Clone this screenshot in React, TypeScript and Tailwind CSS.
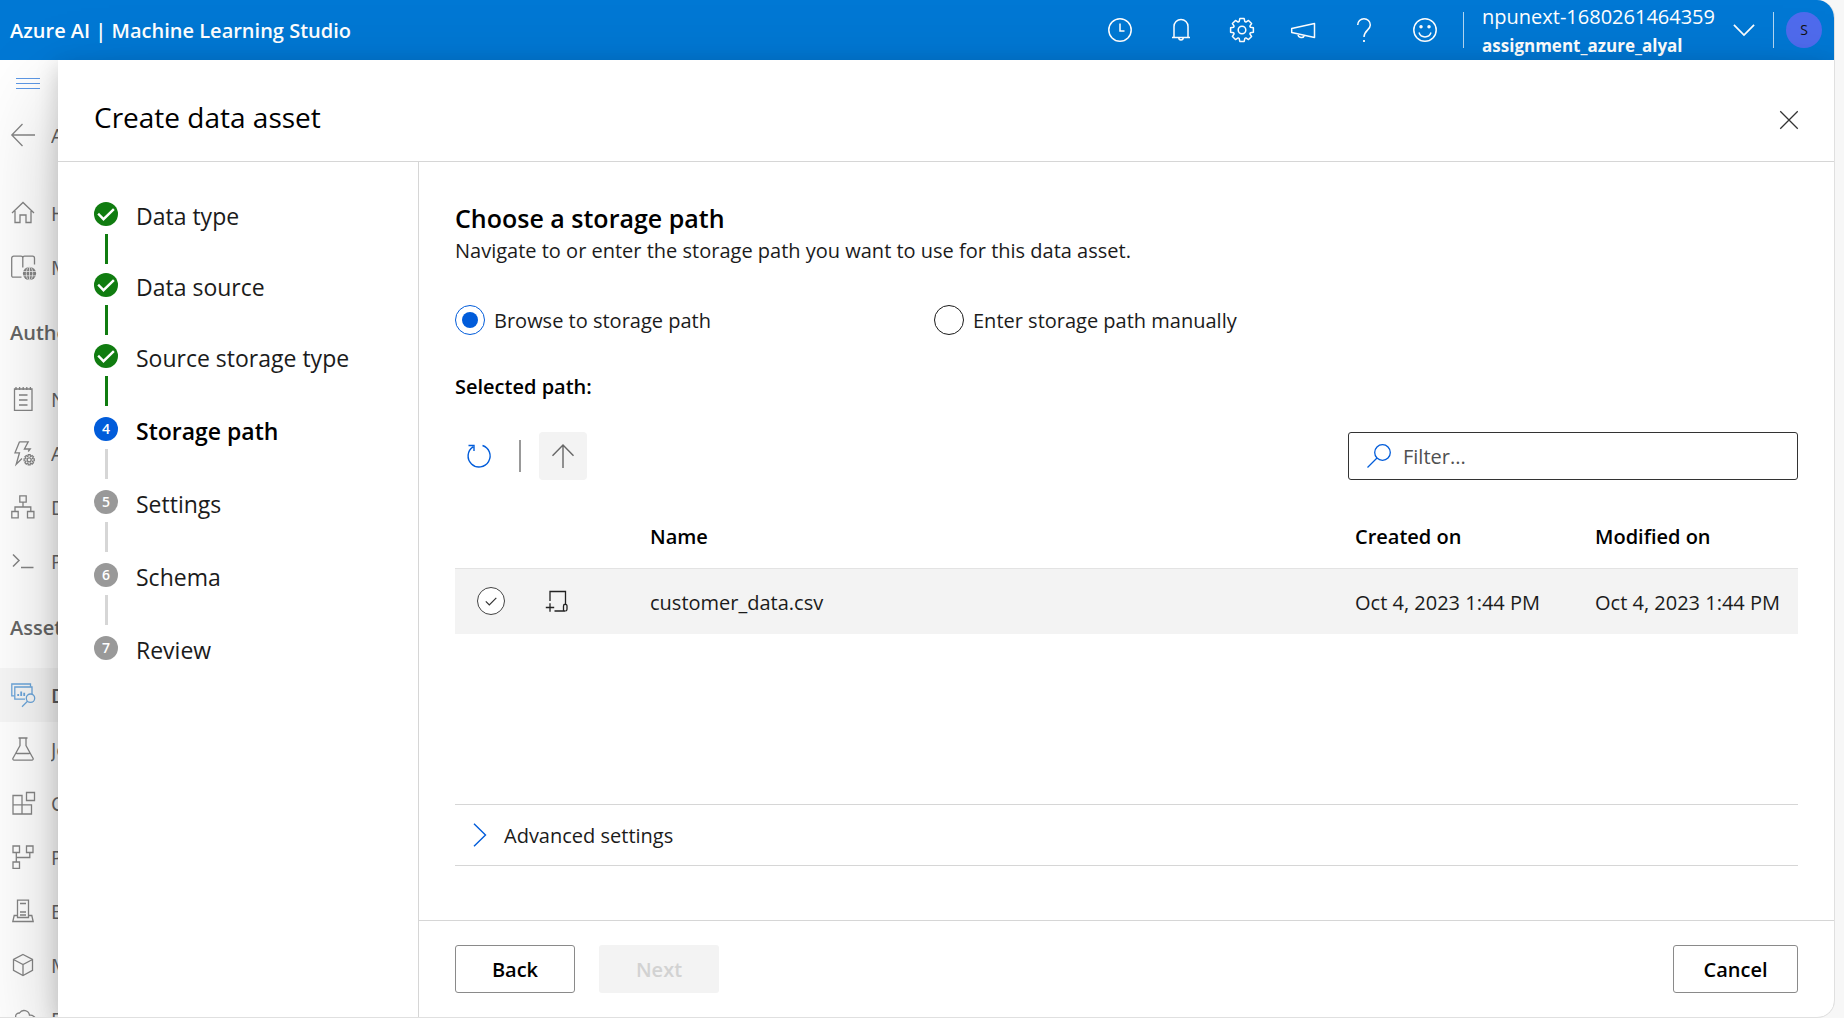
import type { ReactNode } from "react";

function Icon({ children, className = "size-6", stroke = "1.3" }: { children: ReactNode; className?: string; stroke?: string }) {
  return (
    <svg viewBox="0 0 24 24" className={`${className} shrink-0 overflow-visible`} fill="none" stroke="currentColor" strokeWidth={stroke} aria-hidden="true">
      {children}
    </svg>
  );
}

function gearPath(cx: number, cy: number, outer: number, inner: number, teeth: number) {
  const pts: string[] = [];
  for (let i = 0; i < teeth; i++) {
    const a = ((i - 0.5) / teeth) * Math.PI * 2;
    const s = (Math.PI * 2) / teeth;
    const corners: [number, number][] = [
      [0.08, inner],
      [0.26, outer],
      [0.74, outer],
      [0.92, inner],
    ];
    for (const [f, r] of corners) {
      pts.push(`${(cx + Math.sin(a + s * f) * r).toFixed(2)} ${(cy - Math.cos(a + s * f) * r).toFixed(2)}`);
    }
  }
  return `M${pts.join("L")}Z`;
}

const headerActions: { label: string; icon: ReactNode }[] = [
  {
    label: "Recent",
    icon: (
      <>
        <circle cx="12" cy="12" r="11.2" />
        <path d="M12 5.5V13h4.5" />
      </>
    ),
  },
  {
    label: "Notifications",
    icon: (
      <>
        <path d="M3 19.5h18M5 19.5V8.5a7 7 0 0 1 14 0v11" />
        <path d="M9.8 19.8a2.2 2.2 0 0 0 4.4 0" />
      </>
    ),
  },
  {
    label: "Settings",
    icon: (
      <>
        <path d={gearPath(12, 12, 11.6, 8.8, 8)} strokeLinejoin="round" />
        <circle cx="12" cy="12" r="3.8" />
      </>
    ),
  },
  {
    label: "Announcements",
    icon: (
      <path d="M23.5 5.5v14L.7 14.6v-4.2ZM7 16.3a3.4 3.4 0 0 0 6.6 1" strokeLinejoin="round" />
    ),
  },
  {
    label: "Help",
    icon: (
      <>
        <path d="M5.7 7a6.3 6.3 0 0 1 12.6 0c0 5-6.3 5.5-6.3 12" />
        <path d="M12 22v2" strokeWidth="1.8" />
      </>
    ),
  },
  {
    label: "Feedback",
    icon: (
      <>
        <circle cx="12" cy="12" r="11.2" />
        <path d="M6 14.5a6.3 6.3 0 0 0 12 0" />
        <circle cx="8" cy="8.8" r="1" fill="currentColor" />
        <circle cx="16" cy="8.8" r="1" fill="currentColor" />
      </>
    ),
  },
];

const icons = {
  back: <path d="M24 12H.8M11.5 1 .8 12l10.7 11" />,
  home: <path d="M1 12 12 1.5 23 12M4 10v11.5h5V14h6v7.5h5V10" />,
  catalog: (
    <>
      <path d="M10.5 22.2H2.2A1.5 1.5 0 0 1 .7 20.7V3.2a2 2 0 0 1 2-2h7.3a1.8 1.8 0 0 1 1.8 1.8V12.5M11.8 3a1.8 1.8 0 0 1 1.8-1.8h7.9a2 2 0 0 1 2 2V9.5" />
      <circle cx="18.5" cy="18.5" r="6.6" fill="currentColor" stroke="none" />
      <path d="M12 16.5h13M12 20.8h13M18.5 11.5v14" stroke="#f2f2f2" strokeWidth=".8" />
      <ellipse cx="18.5" cy="18.5" rx="3.2" ry="6.8" stroke="#f2f2f2" strokeWidth=".8" />
    </>
  ),
  notebook: <path d="M3.5 2H21v21.3H3.5ZM5 0v3M8.6 0v3M12.2 0v3M15.8 0v3M19.4 0v3M8 8h8.5M8 13h8.5M8 18h8.5" />,
  automl: (
    <>
      <path d="M8.5.8h8.7L13.4 8h5.8l-2 2.5M8.5.8 4 11.8h4.5L5.2 23.3l5.8-5.8" />
      <path d={gearPath(18.2, 18.8, 5.2, 3.6, 8)} strokeWidth="1.2" />
      <circle cx="18.2" cy="18.8" r="2" />
    </>
  ),
  designer: <path d="M8.8.8h6.4v6.4H8.8ZM.8 16.5h6.4v6.3H.8ZM16.5 16.5h6.4v6.3h-6.4ZM12 7.2V12M4 16.5V12h15.8v4.5" />,
  prompt: <path d="m2 5.5 6 6-6 6M10 18.5h12.5" strokeWidth="1.5" />,
  data: (
    <>
      <path d="M3.5 12.8H.8V1h18.7v2.8" />
      <path d="M14 16.2H3.8V4H21v7" />
      <path d="M7.2 13v-2M10.2 13V8.5M13.2 13V9.8" strokeWidth="1.8" />
      <circle cx="19.5" cy="15.2" r="4.2" />
      <path d="M16.5 18.200 11 23.800" />
    </>
  ),
  jobs: <path d="M7.5 1h9M9 1v7.5L2 21.2a1.3 1.3 0 0 0 1.1 2h17.800a1.3 1.3 0 0 0 1.1-2L15 8.5V1M5.5 16.5h13" />,
  components: <path d="M2 4.5h9V23H2ZM2 13.8h18.5V23H2ZM15.5 1.5h8v8h-8Z" />,
  pipelines: <path d="M2 1h6.5v6.5H2ZM15.5 1H22v6.5h-6.5ZM2 17h6.5v6.4H2ZM5.3 7.5V17M5.3 12.5h13.5v-5" />,
  environments: (
    <path d="M6.5 18.5V1.2h11v17.3ZM6.5 16.5H3.2L1.8 22.5h20.4l-1.4-6h-3.3M9 4.5h6M9 13h6M9 16h6" />
  ),
  models: <path d="M12 1.5 21.5 6.5v10.8L12 22.5l-9.5-5.2V6.5ZM2.5 6.5l9.5 5 9.5-5M12 11.5v11" />,
  endpoints: <path d="M5 20a5 5 0 0 1 0-9 3.5 3.5 0 0 1 3.5-5 5.5 5.5 0 0 1 10 2.2A5.8 5.8 0 0 1 20 20Z" />,
};

type RailEntry = { label: string; icon: ReactNode; active?: boolean };

function RailLink({ label, icon, active }: RailEntry) {
  return (
    <a
      href="#"
      className={`flex h-[54px] shrink-0 items-center gap-4 pl-[11px] whitespace-nowrap ${active ? "bg-[#f7f7f7]" : ""}`}
    >
      <span className={active ? "text-[#6ba5da]" : "text-[#858585]"}>
        <Icon>{icon}</Icon>
      </span>
      <span className={`min-w-0 flex-1 overflow-hidden pt-0.5 ${active ? "font-semibold text-[#5c5c5c]" : "text-[#666]"}`}>{label}</span>
    </a>
  );
}

const authoring: RailEntry[] = [
  { label: "Notebooks", icon: icons.notebook },
  { label: "Automated ML", icon: icons.automl },
  { label: "Designer", icon: icons.designer },
  { label: "Prompt flow", icon: icons.prompt },
];

const assets: RailEntry[] = [
  { label: "Data", icon: icons.data, active: true },
  { label: "Jobs", icon: icons.jobs },
  { label: "Components", icon: icons.components },
  { label: "Pipelines", icon: icons.pipelines },
  { label: "Environments", icon: icons.environments },
  { label: "Models", icon: icons.models },
  { label: "Endpoints", icon: icons.endpoints },
];

function Rail() {
  return (
    <nav aria-label="Workspace" className="flex w-[58px] shrink-0 flex-col overflow-hidden bg-white">
      <button type="button" aria-label="Toggle menu" className="h-12 shrink-0 pl-4 text-[#5d98e6]">
        <Icon stroke="1">
          <path d="M0 6.5h24M0 11.5h24M0 16.5h24" />
        </Icon>
      </button>
      <RailLink label="All workspaces" icon={icons.back} />
      <div className="h-6 shrink-0" />
      <RailLink label="Home" icon={icons.home} />
      <RailLink label="Model catalog" icon={icons.catalog} />
      <h2 className="flex h-[78px] shrink-0 items-center pl-2.5 font-semibold text-[#666]">Authoring</h2>
      {authoring.map((e) => (
        <RailLink key={e.label} {...e} />
      ))}
      <h2 className="flex h-20 shrink-0 items-center pl-2.5 font-semibold text-[#666]">Assets</h2>
      {assets.map((e) => (
        <RailLink key={e.label} {...e} />
      ))}
    </nav>
  );
}

const steps: { label: string; state: "done" | "current" | "todo" }[] = [
  { label: "Data type", state: "done" },
  { label: "Data source", state: "done" },
  { label: "Source storage type", state: "done" },
  { label: "Storage path", state: "current" },
  { label: "Settings", state: "todo" },
  { label: "Schema", state: "todo" },
  { label: "Review", state: "todo" },
];

const badgeClass = { done: "bg-[#107c10]", current: "bg-[#015cda]", todo: "bg-[#999]" };

function Steps() {
  return (
    <ol className="flex w-[361px] shrink-0 flex-col border-r border-[#d6d6d6] pt-10 pl-9">
      {steps.map((s, i) => (
        <li key={s.label} className="flex gap-[18px]" aria-current={s.state === "current" ? "step" : undefined}>
          <div className="flex flex-col items-center">
            <span className={`flex size-6 items-center justify-center rounded-full text-sm font-semibold text-white ${badgeClass[s.state]}`}>
              {s.state === "done" ? (
                <Icon stroke="2.4">
                  <path d="m5 12.5 4.500 4.700L19 8" strokeLinecap="square" />
                </Icon>
              ) : (
                i + 1
              )}
            </span>
            {i < steps.length - 1 && (
              <span
                className={`mt-2 h-[30px] w-[3px] ${s.state === "done" ? "bg-[#107c10]" : "bg-[#d6d6d6]"} ${i < 2 ? "mb-[9px]" : "mb-[11px]"}`}
              />
            )}
          </div>
          <span className={`h-7 text-[23px] leading-7 ${s.state === "current" ? "font-semibold text-black" : "text-[#1b1b1b]"}`}>
            {s.label}
          </span>
        </li>
      ))}
    </ol>
  );
}

function RadioOption({ label, defaultChecked }: { label: string; defaultChecked?: boolean }) {
  return (
    <label className="flex w-[479px] items-center gap-[9px]">
      <input
        type="radio"
        name="path-mode"
        defaultChecked={defaultChecked}
        className="grid size-[30px] appearance-none place-items-center rounded-full border border-[#1b1b1b] checked:border-[#015cda] checked:before:size-4 checked:before:rounded-full checked:before:bg-[#015cda]"
      />
      <span className="pt-0.5">{label}</span>
    </label>
  );
}

function FileTable() {
  return (
    <table className="mt-[26px] w-full table-fixed border-collapse text-left">
      <colgroup>
        <col className="w-[90px]" />
        <col className="w-[105px]" />
        <col />
        <col className="w-60" />
        <col className="w-[203px]" />
      </colgroup>
      <thead>
        <tr className="h-[62px] text-black">
          <td />
          <td />
          <th scope="col" className="font-semibold">Name</th>
          <th scope="col" className="font-semibold">Created on</th>
          <th scope="col" className="font-semibold">Modified on</th>
        </tr>
      </thead>
      <tbody>
        <tr className="h-[66px] border-t border-[#e3e3e3] bg-[#f3f3f3] whitespace-nowrap">
          <td className="pl-[22px]">
            <label className="grid size-7 place-items-center">
              <input
                type="checkbox"
                aria-label="Select customer_data.csv"
                className="size-7 appearance-none rounded-full border border-[#444] bg-white [grid-area:1/1]"
              />
              <svg viewBox="0 0 28 28" className="pointer-events-none size-7 [grid-area:1/1]" fill="none" stroke="#333" strokeWidth="1.2" aria-hidden="true">
                <path d="m8.8 14.3 3.5 3.7 7-7.2" />
              </svg>
            </label>
          </td>
          <td>
            <svg viewBox="0 0 24 24" className="size-6" fill="none" stroke="#222" strokeWidth="1.3" aria-hidden="true">
              <path d="M5 12V2.5h15.5v13M9.5 22H20M.8 18.5h8.4M5 14.3v8.4M18.5 22V17a1.7 1.7 0 0 1 3.5 0v3.3A1.7 1.7 0 0 1 20.3 22" />
            </svg>
          </td>
          <td className="pt-1">customer_data.csv</td>
          <td className="pt-1">Oct 4, 2023 1:44 PM</td>
          <td className="pt-1">Oct 4, 2023 1:44 PM</td>
        </tr>
      </tbody>
    </table>
  );
}

function StoragePath() {
  return (
    <section className="flex min-w-0 flex-1 flex-col">
      <div className="flex-1 px-9 pt-10">
        <h2 className="text-[25px] leading-8 font-semibold text-black">Choose a storage path</h2>
        <p className="mt-[3px]">Navigate to or enter the storage path you want to use for this data asset.</p>
        <div className="mt-10 flex" role="radiogroup" aria-label="Storage path mode">
          <RadioOption label="Browse to storage path" defaultChecked />
          <RadioOption label="Enter storage path manually" />
        </div>
        <p className="mt-[38px] font-semibold text-black">Selected path:</p>
        <div className="mt-[31px] flex h-12 items-center">
          <button type="button" aria-label="Refresh" className="grid size-12 place-items-center text-[#015cda]">
            <Icon stroke="1.4">
              <path d="M15.5 1.5A11 11 0 1 1 6 2.8M1.5 1.5H7V7" />
            </Icon>
          </button>
          <span className="ml-4 h-8 w-0.5 bg-[#999]" />
          <button type="button" aria-label="Up one level" className="ml-[18px] grid size-12 place-items-center rounded-sm bg-[#f3f3f3] text-[#666]">
            <Icon stroke="1.4">
              <path d="M12 24V1M1.5 11.8 12 1l10.5 10.8" />
            </Icon>
          </button>
          <label className="ml-auto flex h-12 w-[450px] items-center gap-3 rounded-[3px] border border-[#333] px-[18px] text-[#015cda]">
            <Icon>
              <circle cx="15.5" cy="8.5" r="7.8" />
              <path d="M10 14 .5 23.5" />
            </Icon>
            <input type="search" aria-label="Filter" placeholder="Filter..." className="min-w-0 flex-1 pt-0.5 text-[#1b1b1b] outline-none placeholder:text-[#505050]" />
          </label>
        </div>
        <FileTable />
        <button type="button" className="mt-[170px] flex h-[62px] w-full items-center gap-3 border-y border-[#d6d6d6] pl-[13px]">
          <span className="text-[#015cda]">
            <Icon stroke="1.4">
              <path d="M6 .8 17.5 12 6 23.2" />
            </Icon>
          </span>
          <span className="pt-0.5">Advanced settings</span>
        </button>
      </div>
      <footer className="flex gap-6 border-t border-[#d6d6d6] px-9 py-6">
        <button type="button" className="h-12 w-[120px] rounded-[3px] border border-[#8a8a8a] pt-0.5 font-semibold text-black">Back</button>
        <button type="button" disabled className="h-12 w-[120px] rounded-[3px] bg-[#f3f3f3] pt-0.5 font-semibold text-[#d2d2d2]">Next</button>
        <button type="button" className="ml-auto h-12 w-[125px] rounded-[3px] border border-[#8a8a8a] pt-0.5 font-semibold text-black">Cancel</button>
      </footer>
    </section>
  );
}

function TopBar() {
  return (
    <header className="flex h-[60px] shrink-0 items-center bg-[#0078d4] pr-3 pl-2.5 text-white">
      <h1 className="pt-0.5 font-semibold">Azure AI | Machine Learning Studio</h1>
      <div className="ml-auto flex">
        {headerActions.map((a) => (
          <button key={a.label} type="button" aria-label={a.label} className="grid h-[60px] w-[61px] place-items-center">
            <Icon stroke="1.5">{a.icon}</Icon>
          </button>
        ))}
      </div>
      <span className="ml-2 h-9 w-px bg-white/70" />
      <button type="button" className="flex items-center gap-[18px] px-[18px] text-left leading-[29px]">
        <span className="flex flex-col pt-0.5">
          <span>npunext-1680261464359</span>
          <span className="text-[17px] leading-[29px] font-bold">assignment_azure_alyal</span>
        </span>
        <Icon className="size-[22px]" stroke="1.9">
          <path d="m1 6.500 11 11 11-11" />
        </Icon>
      </button>
      <span className="h-9 w-px bg-white/70" />
      <button type="button" aria-label="Account" className="ml-3 size-9 rounded-full bg-[#4f6bed] text-sm leading-9 text-[#111]">
        S
      </button>
    </header>
  );
}

export default function App() {
  return (
    <div className="h-screen bg-[#f7f7f7] pr-[9px] font-['Open_Sans',sans-serif] text-xl leading-7 text-[#1b1b1b]">
      <div className="flex h-full flex-col overflow-hidden rounded-r-[18px] border-r border-b border-[#e0e0e0] bg-white">
        <TopBar />
        <div className="flex min-h-0 flex-1">
          <Rail />
          <main className="relative z-10 flex min-w-0 flex-1 flex-col bg-white shadow-[0_38px_86px_rgba(0,0,0,0.22),0_7px_22px_rgba(0,0,0,0.18)]">
            <div className="flex h-[102px] shrink-0 items-center justify-between border-b border-[#d6d6d6] pt-4 pr-[35px] pb-1 pl-9">
              <h1 className="text-[28px] leading-9 text-black">Create data asset</h1>
              <button type="button" aria-label="Close" className="pt-1.5 text-[#333]">
                <Icon className="size-5" stroke="1.5">
                  <path d="m1.5 1.5 21 21M22.5 1.5l-21 21" />
                </Icon>
              </button>
            </div>
            <div className="flex min-h-0 flex-1">
              <Steps />
              <StoragePath />
            </div>
          </main>
        </div>
      </div>
    </div>
  );
}
